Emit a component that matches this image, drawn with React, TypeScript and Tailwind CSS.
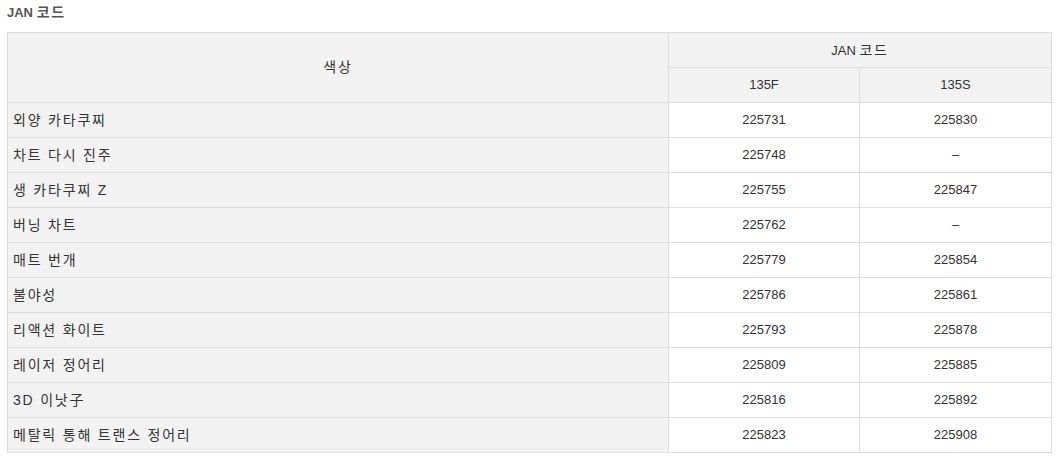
const rows: [string, string, string][] = [
  ['외양 카타쿠찌', '225731', '225830'],
  ['차트 다시 진주', '225748', '–'],
  ['생 카타쿠찌 Z', '225755', '225847'],
  ['버닝 차트', '225762', '–'],
  ['매트 번개', '225779', '225854'],
  ['불야성', '225786', '225861'],
  ['리액션 화이트', '225793', '225878'],
  ['레이저 정어리', '225809', '225885'],
  ['3D 이낫子', '225816', '225892'],
  ['메탈릭 통해 트랜스 정어리', '225823', '225908'],
];

// hangul in the source renders wider than Noto CJK, so stretch it a bit
function Ko({ children }: { children: React.ReactNode }) {
  return <span className="text-[14px] tracking-[1.8px]">{children}</span>;
}

export default function App() {
  return (
    <div className="w-[1057px] h-[462px] bg-white text-[#333] font-['Liberation_Sans','Noto_Sans_CJK_KR',sans-serif] text-[13px]">
      {/* Title */}
      <div className="h-[32px] pl-[7px] pt-[4px] leading-[16px] font-bold text-[#555]">
        JAN <Ko>코드</Ko>
      </div>

      <table className="ml-[7px] w-[1044px] border-collapse table-fixed">
        <colgroup>
          <col className="w-[661px]" />
          <col className="w-[191px]" />
          <col className="w-[192px]" />
        </colgroup>
        <thead>
          <tr className="h-[35px]">
            <th rowSpan={2} className="border border-[#ddd] bg-[#f2f2f2] font-normal text-center">
              <Ko>색상</Ko>
            </th>
            <th colSpan={2} className="border border-[#ddd] bg-[#f2f2f2] font-normal text-center">
              JAN <Ko>코드</Ko>
            </th>
          </tr>
          <tr className="h-[35px]">
            <th className="border border-[#ddd] bg-[#f2f2f2] font-normal text-center">135F</th>
            <th className="border border-[#ddd] bg-[#f2f2f2] font-normal text-center">135S</th>
          </tr>
        </thead>
        <tbody>
          {rows.map(([name, f, s]) => (
            <tr key={name} className="h-[35px]">
              <td className="border border-[#ddd] bg-[#f2f2f2] pl-[5px] text-left">
                <Ko>{name}</Ko>
              </td>
              <td className="border border-[#ddd] text-center">{f}</td>
              <td className="border border-[#ddd] text-center">{s}</td>
            </tr>
          ))}
        </tbody>
      </table>
    </div>
  );
}
